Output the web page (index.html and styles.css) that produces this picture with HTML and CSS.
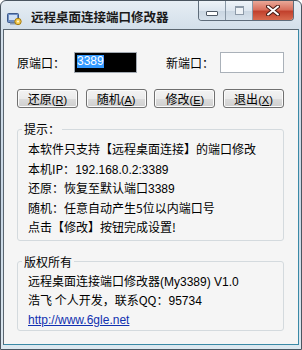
FILE: index.html
```html
<!DOCTYPE html>
<html lang="zh-CN">
<head>
	<meta charset="UTF-8">
	<title>远程桌面连接端口修改器</title>
	<link rel="stylesheet" href="styles.css">
</head>
<body>
	<div class="window">
		<div class="titlebar">
			<svg class="app-icon" width="15" height="15" viewBox="0 0 15 15">
				<rect x="0.5" y="2.5" width="11" height="9" rx="1" fill="#6f8fc4" stroke="#3d5a8c"/>
				<rect x="2" y="4" width="8" height="5" fill="#cfe0f5"/>
				<rect x="3" y="11.5" width="6" height="2" fill="#8a9bb0"/>
				<circle cx="11" cy="10.5" r="3.2" fill="#f2c94c" stroke="#a57b12"/>
				<circle cx="11" cy="10.5" r="1.1" fill="#fff7d6"/>
			</svg>
			<span class="title">远程桌面连接端口修改器</span>
			<div class="caption">
				<span class="cap cap-min"><i></i></span>
				<span class="cap cap-max"><i></i></span>
				<span class="cap cap-close">
					<svg width="14" height="11" viewBox="0 0 14 11">
						<path d="M2 1.5 L12 9.5 M12 1.5 L2 9.5" stroke="#4a1d16" stroke-width="4" stroke-linecap="round"/>
						<path d="M2 1.5 L12 9.5 M12 1.5 L2 9.5" stroke="#fff" stroke-width="2" stroke-linecap="round"/>
					</svg>
				</span>
			</div>
		</div>
		<div class="client">
			<div class="ports">
				<span class="label">原端口：</span>
				<span class="field field-old"><span class="sel">3389</span></span>
				<span class="label label-new">新端口：</span>
				<span class="field field-new"></span>
			</div>
			<div class="buttons">
				<button class="btn">还原<small>(<u>R</u>)</small></button>
				<button class="btn">随机<small>(<u>A</u>)</small></button>
				<button class="btn">修改<small>(<u>E</u>)</small></button>
				<button class="btn">退出<small>(<u>X</u>)</small></button>
			</div>
			<fieldset class="group group-tips">
				<legend>提示：</legend>
				<p>本软件只支持【远程桌面连接】的端口修改</p>
				<p>本机IP：<span class="num">192.168.0.2:3389</span></p>
				<p>还原：恢复至默认端口<span class="num">3389</span></p>
				<p>随机：任意自动产生5位以内端口号</p>
				<p>点击【修改】按钮完成设置!</p>
			</fieldset>
			<fieldset class="group group-about">
				<legend>版权所有</legend>
				<p>远程桌面连接端口修改器<span class="num">(My3389) V1.0</span></p>
				<p>浩飞 个人开发，联系QQ：<span class="num">95734</span></p>
				<p><a href="javascript:;">http://www.6gle.net</a></p>
			</fieldset>
		</div>
	</div>
</body>
</html>
```

FILE: styles.css
```css
		body {
			margin: 0;
			padding: 0;
			font-family: "Liberation Sans", "Noto Sans CJK SC", sans-serif;
			font-size: 12px;
			color: #000;
		}
		.window {
			box-sizing: border-box;
			width: 302px;
			height: 350px;
			display: flex;
			flex-direction: column;
			border: 1px solid #4a5560;
			border-radius: 6px 6px 0 0;
			background: linear-gradient(180deg, #e6edf4 0, #d3dfea 28px, #c8d7e5 60%, #dce8f0 100%);
		}
		.titlebar {
			height: 28px;
			display: flex;
			align-items: flex-start;
			padding: 0 7px 0 6px;
		}
		.app-icon {
			margin-top: 10px;
		}
		.title {
			margin: 9px 0 0 9px;
			line-height: 14px;
			font-size: 12.5px;
			font-weight: bold;
			color: #1a1a1a;
			font-family: "Noto Sans CJK SC", sans-serif;
		}
		.caption {
			margin-left: auto;
			display: flex;
			height: 19px;
			border: 1px solid #5e6c7a;
			border-top: 0;
			border-radius: 0 0 4px 4px;
			overflow: hidden;
		}
		.cap {
			display: flex;
			align-items: center;
			justify-content: center;
			height: 19px;
		}
		.cap-min,
		.cap-max {
			width: 26px;
			border-right: 1px solid #8997a5;
			background: linear-gradient(180deg, #eef3f8 0, #dde6ef 50%, #c9d5e1 51%, #d6e1eb 100%);
		}
		.cap-min i {
			display: block;
			width: 10px;
			height: 3px;
			margin-top: 5px;
			border: 1px solid #4e5965;
			background: #fff;
			border-radius: 1px;
		}
		.cap-max i {
			display: block;
			width: 7px;
			height: 6px;
			border: 1px solid #8d9aa8;
			border-top-width: 2px;
			background: #eef2f6;
		}
		.cap-close {
			width: 40px;
			background: linear-gradient(180deg, #eaa898 0, #d9715e 45%, #c2412d 55%, #d86b4f 100%);
		}
		.client {
			flex: 1;
			margin: 0 2px 4px 2px;
			border: 1px solid #5b6670;
			border-right-color: #3a89a6;
			border-bottom-color: #3a89a6;
			background: #f5f5f5;
			padding: 0 14px 0 13px;
		}
		.ports {
			display: flex;
			align-items: center;
			margin-top: 22px;
			height: 21px;
		}
		.label {
			width: 57px;
			font-family: "Noto Sans CJK SC", sans-serif;
		}
		.label-new {
			width: 54px;
			margin-left: 29px;
		}
		.field {
			box-sizing: border-box;
			height: 21px;
			border: 1px solid #a3aab2;
			padding: 1px 2px;
		}
		.field-old {
			width: 63px;
			background: #000;
		}
		.field-new {
			width: 64px;
			background: #fff;
			border-color: #aab1b9;
		}
		.sel {
			display: inline-block;
			line-height: 13px;
			background: #3399ff;
			color: #fff;
		}
		.buttons {
			display: flex;
			justify-content: space-between;
			margin-top: 16px;
		}
		.btn {
			width: 61px;
			height: 19px;
			padding: 0;
			border: 1px solid #707070;
			border-radius: 3px;
			background: linear-gradient(180deg, #f3f3f3 0, #ebebeb 50%, #dcdcdc 51%, #cfcfcf 100%);
			box-shadow: inset 0 0 0 1px #fbfbfb;
			font-family: "Noto Sans CJK SC", sans-serif;
			font-size: 12px;
			line-height: 16px;
			color: #000;
		}
		.btn small {
			font-family: "Liberation Sans", sans-serif;
			font-size: 11px;
			line-height: 1;
		}
		.group {
			margin: 14px 0 0 0;
			padding: 3px 0 3px 4px;
			border: 1px solid #d4dade;
			border-radius: 3px;
			min-width: 0;
		}
		.group legend {
			padding: 0 2px;
			line-height: 14px;
			font-family: "Noto Sans CJK SC", sans-serif;
		}
		.group p {
			margin: 0;
			padding-left: 6px;
			height: 19.5px;
			line-height: 19.5px;
			white-space: nowrap;
			font-family: "Noto Sans CJK SC", sans-serif;
		}
		.group-about {
			padding-top: 2px;
			padding-bottom: 2px;
		}
		.group-about p {
			height: 19px;
			line-height: 19px;
		}
		.num,
		.group a {
			font-family: "Liberation Sans", sans-serif;
			line-height: 1;
		}
		.group a {
			color: #1030b0;
			text-decoration: underline;
		}
```
